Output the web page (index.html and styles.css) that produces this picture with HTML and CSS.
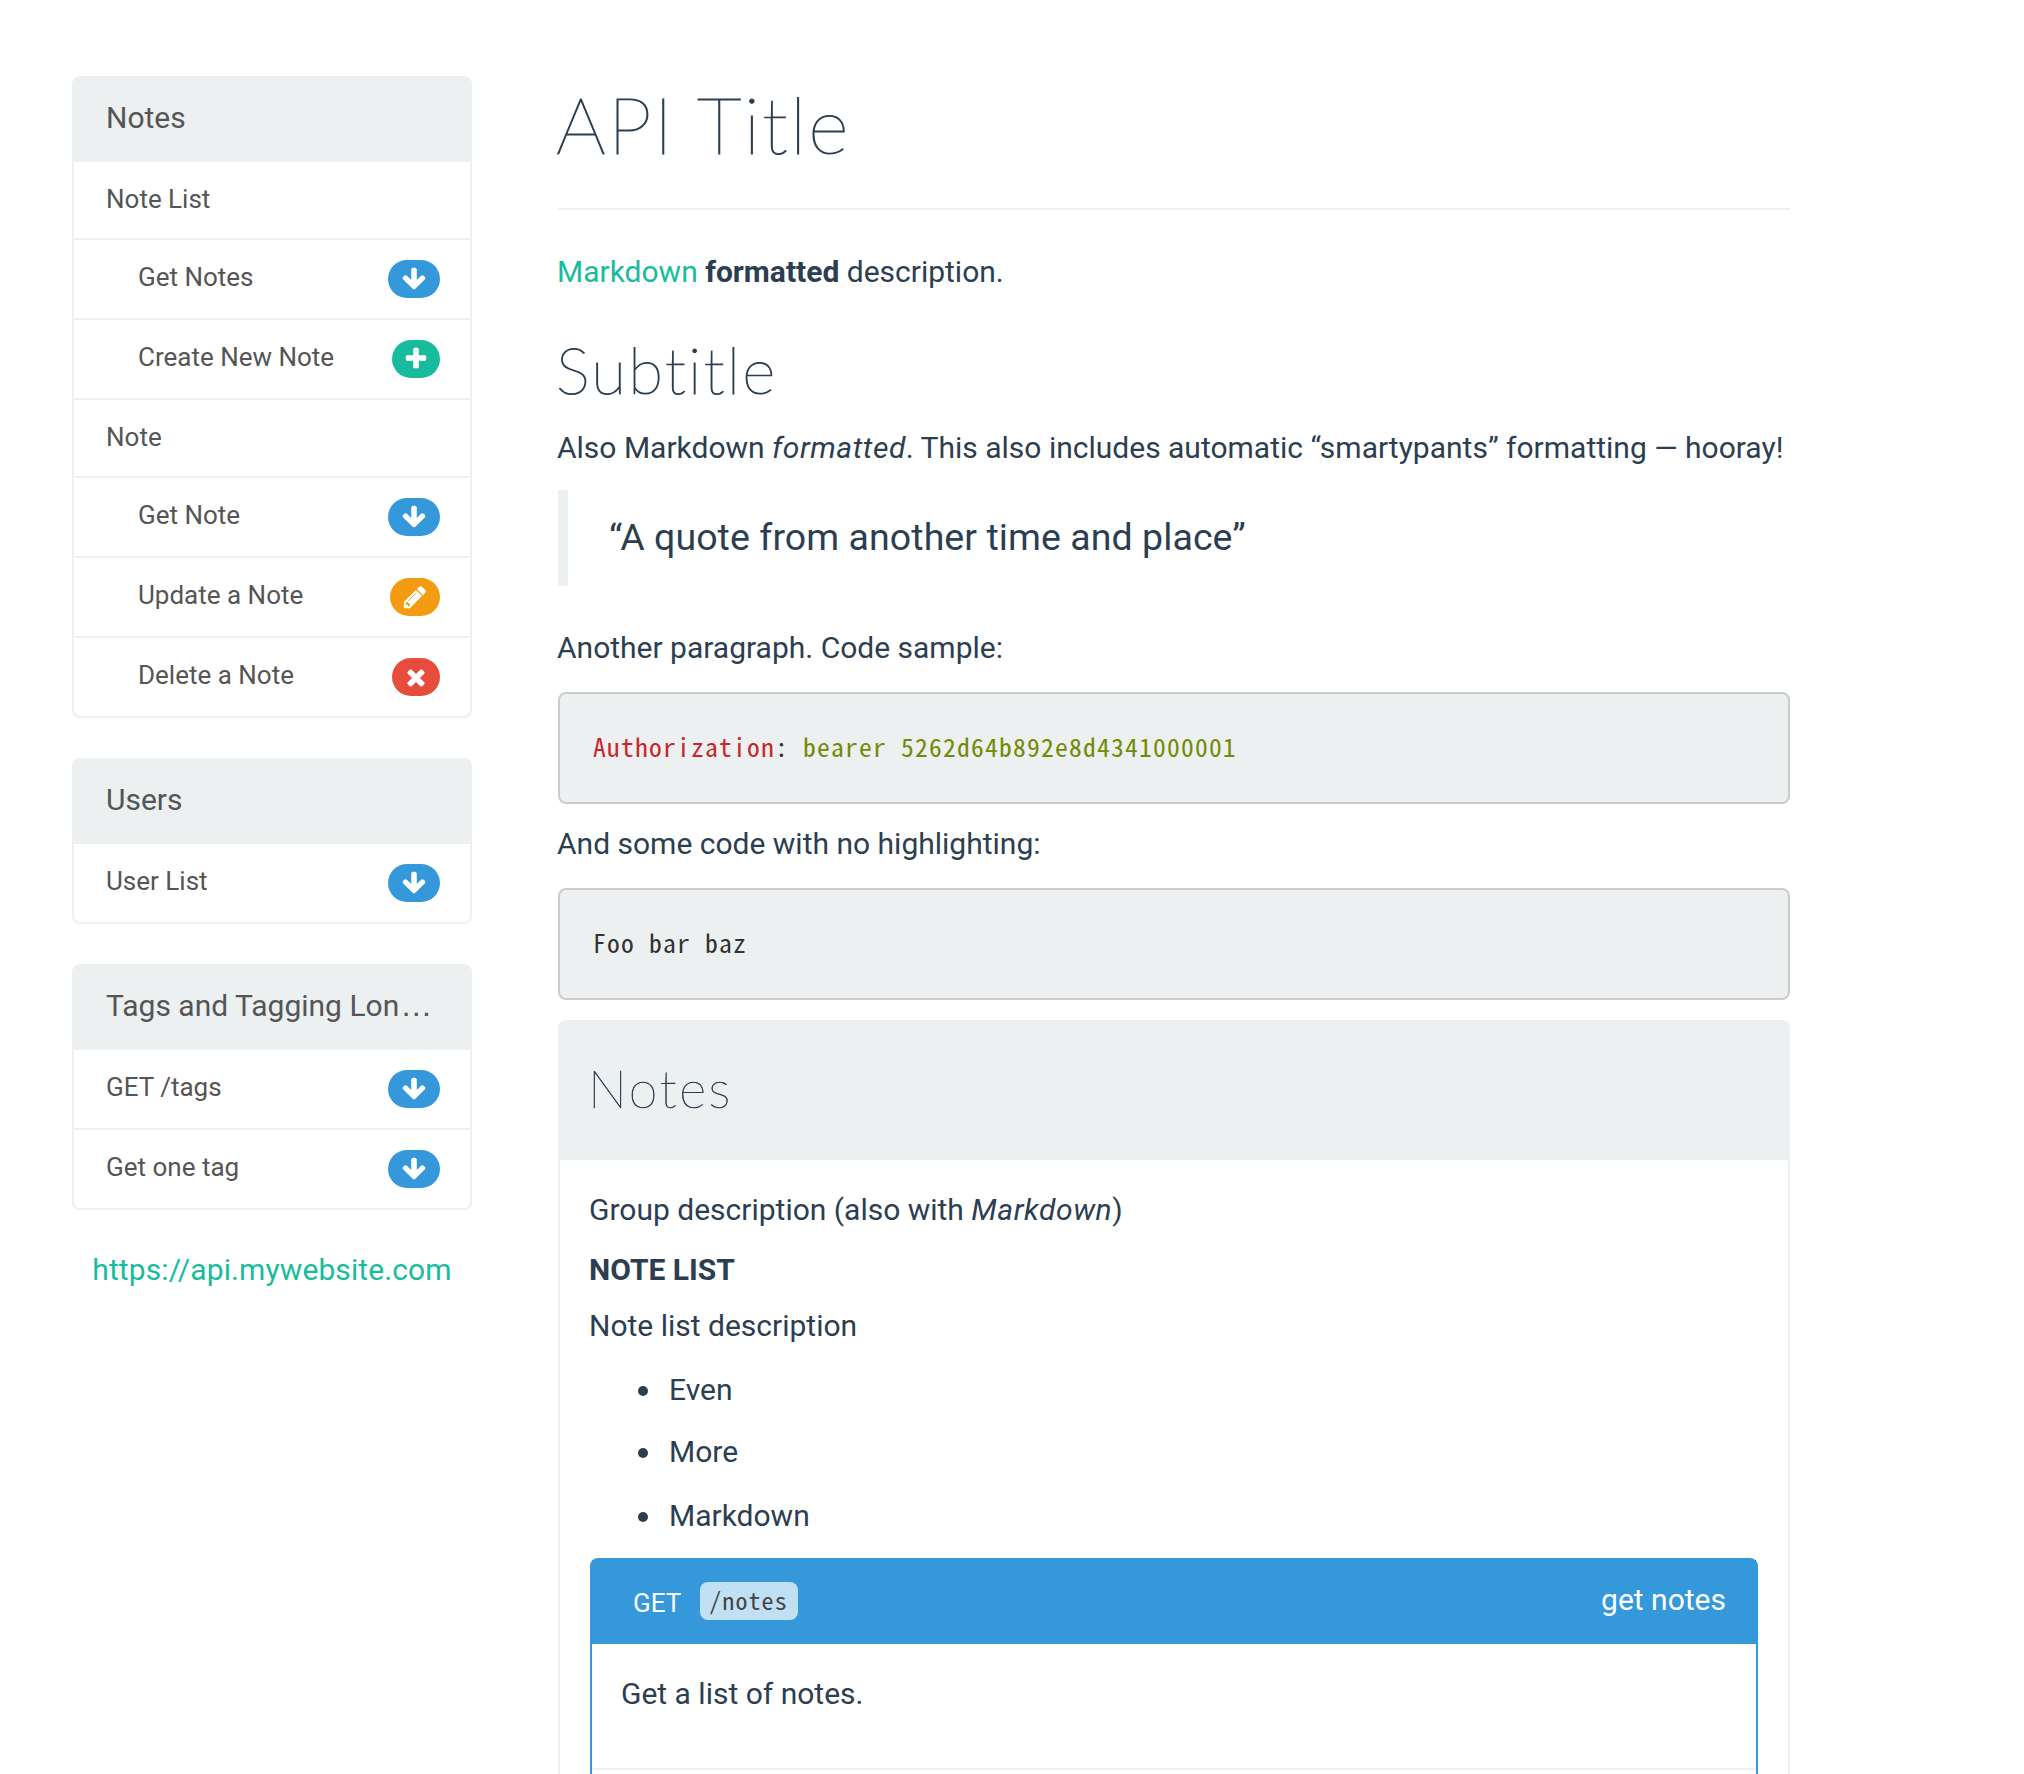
FILE: index.html
```html
<!DOCTYPE html>
<html lang="en">
<head>
<meta charset="utf-8">
<title>API Title</title>
<link rel="stylesheet" href="styles.css">
</head>
<body>
<svg class="sprite" aria-hidden="true">
  <symbol id="down" viewBox="0 0 1792 1792"><path d="M1675 832q0 53-37 90l-651 652q-39 37-91 37-53 0-90-37l-651-652q-38-36-38-90 0-53 38-91l74-75q39-37 91-37 53 0 90 37l294 294v-704q0-52 38-90t90-38h128q52 0 90 38t38 90v704l294-294q37-37 90-37 52 0 91 37l75 75q37 39 37 91z"/></symbol>
  <symbol id="plus" viewBox="0 0 1792 1792"><path d="M1600 736v192q0 40-28 68t-68 28h-416v416q0 40-28 68t-68 28h-192q-40 0-68-28t-28-68v-416h-416q-40 0-68-28t-28-68v-192q0-40 28-68t68-28h416v-416q0-40 28-68t68-28h192q40 0 68 28t28 68v416h416q40 0 68 28t28 68z"/></symbol>
  <symbol id="pencil" viewBox="0 0 1792 1792"><path d="M491 1536l91-91-235-235-91 91v107h128v128h107zm523-928q0-22-22-22-10 0-17 7l-542 542q-7 7-7 17 0 22 22 22 10 0 17-7l542-542q7-7 7-17zm-54-192l416 416-832 832h-416v-416zm683 96q0 53-37 90l-166 166-416-416 166-165q36-38 90-38 53 0 91 38l235 234q37 39 37 91z"/></symbol>
  <symbol id="times" viewBox="0 0 1792 1792"><path d="M1490 1322q0 40-28 68l-136 136q-28 28-68 28t-68-28l-294-294-294 294q-28 28-68 28t-68-28l-136-136q-28-28-28-68t28-68l294-294-294-294q-28-28-28-68t28-68l136-136q28-28 68-28t68 28l294 294 294-294q28-28 68-28t68 28l136 136q28 28 28 68t-28 68l-294 294 294 294q28 28 28 68z"/></symbol>
</svg>
<div class="page">
  <nav class="sidebar">
    <div class="nav-panel">
      <div class="nav-heading">Notes</div>
      <div class="nav-item">Note List</div>
      <div class="nav-item sub">Get Notes<span class="badge get"><svg><use href="#down"/></svg></span></div>
      <div class="nav-item sub">Create New Note<span class="badge post"><svg><use href="#plus"/></svg></span></div>
      <div class="nav-item">Note</div>
      <div class="nav-item sub">Get Note<span class="badge get"><svg><use href="#down"/></svg></span></div>
      <div class="nav-item sub">Update a Note<span class="badge put"><svg><use href="#pencil"/></svg></span></div>
      <div class="nav-item sub">Delete a Note<span class="badge delete"><svg><use href="#times"/></svg></span></div>
    </div>
    <div class="nav-panel">
      <div class="nav-heading">Users</div>
      <div class="nav-item action">User List<span class="badge get"><svg><use href="#down"/></svg></span></div>
    </div>
    <div class="nav-panel">
      <div class="nav-heading">Tags and Tagging Lon<span class="more">…</span></div>
      <div class="nav-item action">GET /tags<span class="badge get"><svg><use href="#down"/></svg></span></div>
      <div class="nav-item action">Get one tag<span class="badge get"><svg><use href="#down"/></svg></span></div>
    </div>
    <a class="host">https://api.mywebsite.com</a>
  </nav>
  <main class="content">
    <header class="title"><h1>API Title</h1></header>
    <p class="lead"><a>Markdown</a> <strong>formatted</strong> description.</p>
    <h2>Subtitle</h2>
    <p class="intro">Also Markdown <em>formatted</em>. This also includes automatic “smartypants” formatting — hooray!</p>
    <blockquote><p>“A quote from another time and place”</p></blockquote>
    <p class="sample">Another paragraph. Code sample:</p>
    <pre><span class="attr">Authorization</span>: <span class="value">bearer 5262d64b892e8d4341000001</span></pre>
    <p class="plain">And some code with no highlighting:</p>
    <pre>Foo bar baz</pre>
    <section class="group">
      <h2 class="group-heading">Notes</h2>
      <div class="group-body">
        <p>Group description (also with <em>Markdown</em>)</p>
        <h4>NOTE LIST</h4>
        <p>Note list description</p>
        <ul><li>Even</li><li>More</li><li>Markdown</li></ul>
        <article class="action-panel">
          <div class="action-heading">
            <span class="method">GET</span><code>/notes</code><span class="name">get notes</span>
          </div>
          <div class="action-body"><p>Get a list of notes.</p></div>
          <div class="action-rest"></div>
        </article>
      </div>
    </section>
  </main>
</div>
</body>
</html>
```
FILE: styles.css
```css
* { box-sizing: border-box; }
body {
  margin: 0;
  height: 1774px;
  overflow: hidden;
  background: #fff;
  color: #2c3e50;
  font: 30px/42px Roboto, "Liberation Sans", sans-serif;
}
h1, h2, h4, p, ul, pre, blockquote { margin: 0; }
a { color: #18bc9c; }
em { letter-spacing: 0.55px; }
.sprite { display: none; }
.page { display: flex; gap: 86px; padding: 76px 0 0 72px; }

.sidebar { width: 400px; flex: none; color: #555; }
.nav-panel {
  border: 2px solid #ecf0f1;
  border-radius: 8px;
  overflow: hidden;
  margin-bottom: 40px;
}
.nav-heading { height: 84px; padding: 19px 32px; background: #ecf0f1; white-space: nowrap; }
.more { margin-left: 1px; font-family: "Liberation Sans", sans-serif; font-size: 32px; line-height: 1; }
.nav-item {
  display: flex;
  justify-content: space-between;
  height: 78px;
  padding: 18px 30px 0 32px;
  border-bottom: 2px solid #ecf0f1;
  font-size: 26px;
  line-height: 38px;
}
.nav-item.sub { height: 80px; padding-left: 64px; }
.nav-item.action { height: 80px; }
.nav-item:last-child { height: 78px; border-bottom: 0; }
.badge {
  display: flex;
  justify-content: center;
  width: 52px;
  height: 38px;
  margin-top: 2px;
  padding-top: 5.5px;
  border-radius: 20px;
}
.badge svg { width: 26px; height: 26px; fill: #fff; }
.get { background: #3498db; }
.post { width: 48px; background: #18bc9c; }
.put { width: 50px; background: #f39c12; }
.delete { width: 48px; background: #e74c3c; }
.host { display: block; margin-top: -1px; text-align: center; letter-spacing: 0.1px; }

.content { width: 1232px; padding-top: 5px; }
.content p, h4 { text-indent: -1px; }
h1, h2 {
  font-family: Lato, sans-serif;
  font-weight: 100;
  text-indent: -2px;
  -webkit-text-stroke: 1.1px #2c3e50;
}
.title { padding-bottom: 41px; border-bottom: 2px solid #ecf0f1; }
h1 { font-size: 78px; line-height: 86px; letter-spacing: 2.2px; }
h2 { margin-top: 42px; font-size: 64px; line-height: 70px; letter-spacing: 2.2px; font-variant-ligatures: none; }
.lead { margin-top: 41px; }
.intro { margin-top: 22px; white-space: nowrap; }
blockquote {
  margin-top: 21px;
  padding: 20px 0 22px 42px;
  border-left: 10px solid #ecf0f1;
  font-size: 37.5px;
  line-height: 54px;
  letter-spacing: 0.07px;
}
.sample { margin-top: 41px; }
.plain { margin-top: 19px; }
pre, code { font-family: "Noto Sans Mono CJK SC", "Liberation Mono", monospace; }
pre {
  height: 112px;
  margin-top: 23px;
  padding: 32px 33px;
  border: 2px solid #ccc;
  border-radius: 8px;
  background: #ecf0f1;
  color: #333;
  font-size: 25.6px;
  line-height: 40px;
  letter-spacing: 1.2px;
}
.attr { color: #c9252d; }
.value { color: #738a05; }

.group { margin-top: 20px; border: 2px solid #ecf0f1; border-radius: 8px 8px 0 0; }
.group-heading {
  height: 138px;
  margin: 0;
  padding: 37px 30px 0;
  background: #ecf0f1;
  font-size: 52px;
  line-height: 58px;
  letter-spacing: 2.6px;
  -webkit-text-stroke-width: 0.6px;
}
.group-body { padding: 29px 30px 0; }
h4 { margin: 18px 0 14px; font-size: 30px; font-weight: 700; }
ul { margin: 22px 0 21px; padding-left: 79px; list-style: none; }
li { display: flex; align-items: center; }
li::before {
  content: "";
  width: 10px;
  height: 10px;
  margin: 2px 21px 0 -31px;
  border-radius: 50%;
  background: #2c3e50;
}
li + li { margin-top: 20px; }
li:last-child { margin-top: 22px; }
.action-panel { border: 2px solid #3498db; border-radius: 8px 8px 0 0; }
.action-heading {
  display: flex;
  height: 84px;
  padding: 20px 30px 0 41px;
  background: #3498db;
  color: #fff;
}
.method { width: 67px; font-size: 26px; line-height: 47px; }
code {
  width: 98px;
  height: 38px;
  margin-top: 2px;
  border-radius: 8px;
  background: #c2e0f4;
  color: #444;
  font-size: 24px;
  line-height: 35px;
  letter-spacing: 1.1px;
  text-align: center;
  text-indent: -1px;
}
.name { margin-left: auto; margin-top: -1px; }
.action-body { height: 126px; padding: 29px 30px; border-bottom: 2px solid #ecf0f1; }
.action-rest { height: 40px; }
```
